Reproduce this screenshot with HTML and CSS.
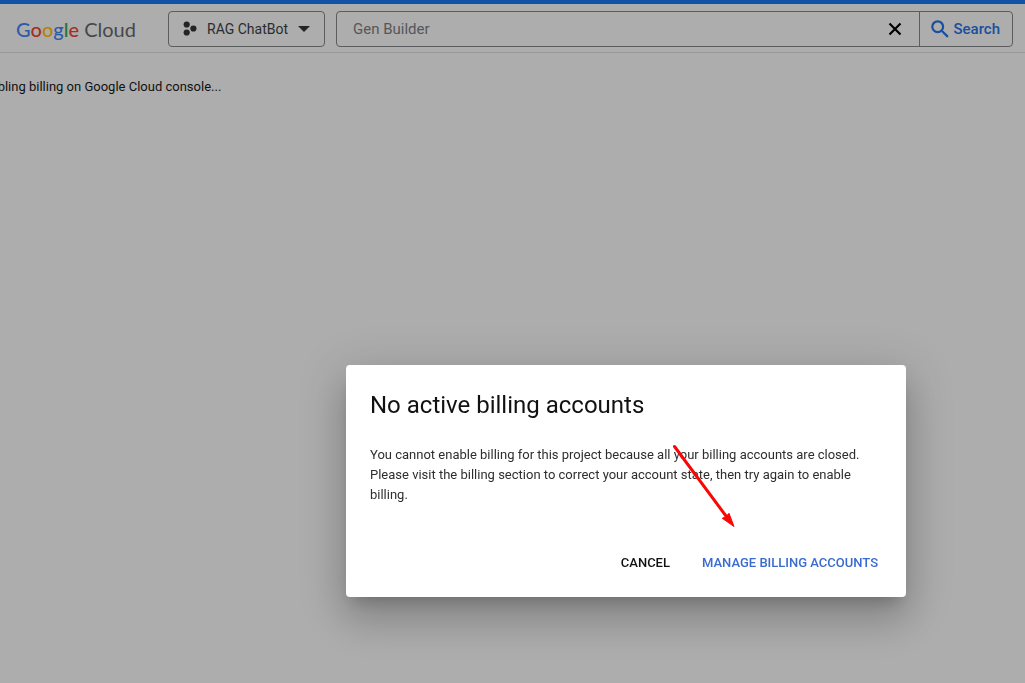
FILE: index.html
```html
<!DOCTYPE html>
<html lang="en">
<head>
<meta charset="utf-8">
<meta name="viewport" content="width=device-width, initial-scale=1">
<title>Google Cloud console</title>
<link rel="stylesheet" href="styles.css">
</head>
<body>
<header class="topbar">
  <a class="logo" href="#"><span class="brand"><span class="blue">G</span><span class="red">o</span><span class="yellow">o</span><span class="blue">g</span><span class="green">l</span><span class="red">e</span></span> Cloud</a>
  <button class="project" type="button">
    <svg class="project-icon" viewBox="0 0 14 16" aria-hidden="true"><circle cx="3.700" cy="3.500" r="3.100"/><circle cx="3.700" cy="11.500" r="3.100"/><circle cx="10.400" cy="7.500" r="3.100"/></svg>
    <span>RAG ChatBot</span>
    <svg class="caret" viewBox="0 0 12 6" aria-hidden="true"><path d="M0 0h12L6 6z"/></svg>
  </button>
  <form class="search">
    <input class="search-input" type="text" aria-label="Search resources" value="Gen Builder">
    <button class="clear" type="button" aria-label="Clear search">
      <svg viewBox="0 0 14 14" aria-hidden="true"><path d="M1.500 1.500l11 11M12.500 1.500l-11 11"/></svg>
    </button>
    <button class="submit" type="button">
      <svg viewBox="0 0 18 18" aria-hidden="true"><circle cx="6.700" cy="6.700" r="5.400"/><path d="M10.700 10.700l6.200 6.200"/></svg>
      <span>Search</span>
    </button>
  </form>
</header>
<main class="page">
  <p class="status">Enabling billing on Google Cloud console...</p>
</main>
<div class="overlay">
  <section class="dialog" role="dialog" aria-modal="true" aria-labelledby="dialog-title">
    <h1 class="dialog-title" id="dialog-title">No active billing accounts</h1>
    <p class="dialog-text">You cannot enable billing for this project because all your billing accounts are closed. Please visit the billing section to correct your account state, then try again to enable billing.</p>
    <div class="actions">
      <button class="action" type="button">CANCEL</button>
      <button class="action primary" type="button">MANAGE BILLING ACCOUNTS</button>
    </div>
    <svg class="arrow" viewBox="0 0 64 84" aria-hidden="true"><path class="shaft" d="M2.500 2.500L54 72"/><path class="head" d="M62 82.500L50.300 74.300L54 72.500L57 69.300z"/></svg>
  </section>
</div>
</body>
</html>
```
FILE: styles.css
```css
* { box-sizing: border-box; }

body {
  margin: 0;
  min-height: 100vh;
  overflow: hidden;
  background: #adadad;
  color: #111;
  font-family: Roboto, "Liberation Sans", sans-serif;
  font-size: 13px;
  line-height: 20px;
}

button, input { font: inherit; color: inherit; background: none; border: 0; padding: 0; margin: 0; }
button { cursor: pointer; }

.topbar {
  display: flex;
  align-items: center;
  height: 53px;
  padding: 1px 12px 0 16px;
  border-top: 4px solid #1153a6;
  border-bottom: 1px solid #999;
}

.logo {
  flex: none;
  width: 152px;
  color: #45484b;
  font-family: Lato, sans-serif;
  font-size: 20px;
  line-height: 24px;
  text-decoration: none;
  white-space: nowrap;
}
.brand { font-weight: 500; }
.blue { color: #2d5ba8; }
.red { color: #a52f27; }
.yellow { color: #b58305; }
.green { color: #25743a; }

.project {
  flex: none;
  display: flex;
  align-items: center;
  width: 157px;
  height: 36px;
  margin-right: 11px;
  padding: 0 14px;
  border: 1px solid #5a5c5e;
  border-radius: 4px;
  color: #2a2c2e;
  font-size: 14px;
  white-space: nowrap;
}
.project-icon { width: 14px; height: 16px; margin-right: 10px; fill: #222426; }
.caret { width: 12px; height: 6px; margin-left: auto; fill: #222426; }

.search {
  flex: 1;
  display: flex;
  height: 36px;
  border: 1px solid #5a5c5e;
  border-radius: 4px;
}
.search-input { flex: 1; min-width: 0; padding: 0 16px; color: #555759; font-size: 15px; outline: 0; }
.clear { display: grid; place-items: center; width: 48px; }
.clear svg { width: 14px; height: 14px; fill: none; stroke: #000; stroke-width: 2.2; }
.submit {
  display: flex;
  align-items: center;
  gap: 4px;
  padding: 0 12px 0 11px;
  border-left: 1px solid #5a5c5e;
  color: #1a4f9f;
  font-size: 15px;
  font-weight: 500;
}
.submit svg { width: 18px; height: 18px; fill: none; stroke: currentColor; stroke-width: 2.2; }

.page { padding-top: 24px; }
.status { margin: 0; text-indent: -24px; white-space: nowrap; }

.overlay {
  position: fixed;
  inset: 0;
  display: flex;
  justify-content: flex-end;
  align-items: flex-end;
  padding: 0 119px 86px 24px;
}
.dialog {
  position: relative;
  width: 100%;
  max-width: 560px;
  padding: 24px 24px 16px;
  border-radius: 4px;
  background: #fff;
  box-shadow: 0 11px 15px -7px rgba(0, 0, 0, .2), 0 24px 38px 3px rgba(0, 0, 0, .14), 0 9px 46px 8px rgba(0, 0, 0, .12);
}
.dialog-title { margin: 0 0 24px; color: #111; font-size: 24px; font-weight: 400; line-height: 32px; }
.dialog-text { margin: 0 0 40px; color: #2e2e2e; }
.actions { display: flex; justify-content: flex-end; gap: 24px; }
.action { height: 36px; padding: 0 4px; color: #111; font-weight: 500; }
.primary { color: #3a6bce; }

.arrow { position: absolute; top: 79px; left: 326px; width: 64px; height: 84px; }
.shaft { fill: none; stroke: #fb0505; stroke-width: 3; stroke-linecap: round; }
.head { fill: #fb0505; stroke: #fb0505; stroke-width: 1; }
```
